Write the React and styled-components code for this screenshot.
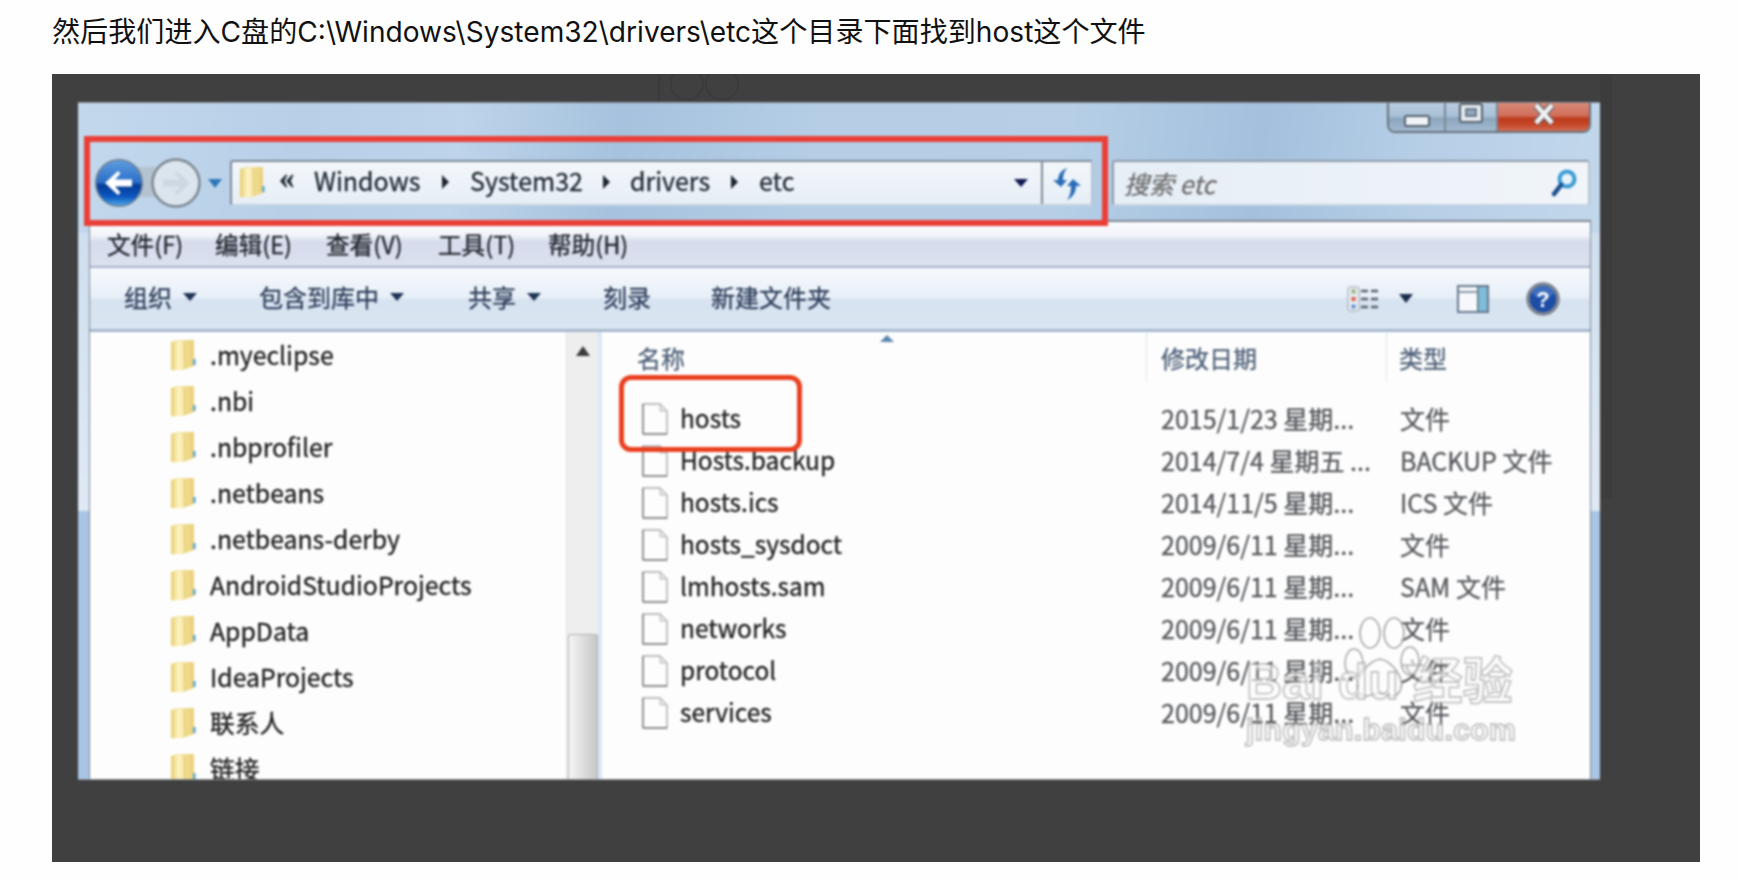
import React from "react";
import styled, { createGlobalStyle } from "styled-components";

const Global = createGlobalStyle`
  html, body { margin: 0; padding: 0; background: #fefefe; }
  body { font-family: "Noto Sans CJK SC", "Noto Sans", sans-serif; width: 1738px; height: 880px; overflow: hidden; }
  * { box-sizing: border-box; }
`;

const Page = styled.div`
  width: 1738px;
  height: 880px;
  padding-left: 52px;
  background: #fefefe;
`;
const Heading = styled.p`
  margin: 0;
  height: 74px;
  padding-top: 13px;
  font: 400 28.1px/38px Inter, "Noto Sans CJK SC", sans-serif;
  color: #111;
  white-space: nowrap;
`;
const Shot = styled.div`
  position: relative;
  width: 1648px;
  height: 788px;
  padding: 28px 100px 82px 26px;
  background: #404040;
  overflow: hidden;
`;
const Ghost = styled.svg`
  position: absolute;
  left: 0;
  top: 0;
  width: 1648px;
  height: 440px;
`;
const Win = styled.div`
  position: relative;
  width: 1522px;
  height: 678px;
  display: flex;
  flex-direction: column;
  overflow: hidden;
  filter: blur(0.9px);
  -webkit-text-stroke: 0.3px currentColor;
  border-top: 1px solid #8a9099;
  border-bottom: 1px solid #8d949c;
  background: linear-gradient(97deg, #c3d8ec 0, #b7d0e8 14%, #bdd4ea 24%, #a6c2de 34%, #b5cee6 46%, #b6cfe7 62%, #a4c0dd 74%, #b6cfe7 84%, #c6daed 100%);
`;
const SideBand = styled.div`
  position: absolute;
  top: 130px;
  bottom: 0;
  ${(p) => (p.$right ? "right: 0; width: 9px;" : "left: 0; width: 11px;")}
  background: linear-gradient(#cfdfef 0, #dfe9f4 278px, #a9c5e5 278px);
`;
const TitleRow = styled.div`
  height: 57px;
  display: flex;
  justify-content: flex-end;
  align-items: flex-start;
  padding-right: 9px;
`;
const Caption = styled.div`
  display: flex;
  height: 30px;
  border: 2px solid #69717b;
  border-top: 0;
  border-radius: 0 0 8px 8px;
  overflow: hidden;
`;
const CapBtn = styled.div`
  width: ${(p) => p.$w}px;
  display: flex;
  justify-content: center;
  align-items: ${(p) => p.$align || "center"};
  padding-bottom: ${(p) => p.$pb || 0}px;
  border-left: ${(p) => (p.$first ? "0" : "2px solid #7c8792")};
  background: ${(p) =>
    p.$close
      ? "linear-gradient(#d98a78 0, #cf6f5a 45%, #bd3a1c 55%, #c64a2a 80%, #d36f57 100%)"
      : "linear-gradient(#b8cde0 0, #a8c0d6 48%, #8ba5bd 55%, #a3bbd2 100%)"};
`;
const NavRow = styled.div`
  height: 46px;
  display: flex;
  align-items: stretch;
  padding: 0 12px 0 7px;
`;
const RoundBtns = styled.div`
  position: relative;
  width: 145px;
  flex: none;
  height: 46px;
  display: flex;
  align-items: center;
  padding-left: 9px;
`;
const Capsule = styled.i`
  position: absolute;
  left: 40px;
  top: 7px;
  width: 42px;
  height: 30px;
  background: #b5c3d1;
`;
const RoundIcon = styled.svg`
  position: relative;
  flex: none;
  margin-right: ${(p) => p.$mr || 0}px;
`;
const Address = styled.div`
  width: 863px;
  flex: none;
  display: flex;
  align-items: center;
  border: 2px solid #7e8a97;
  border-bottom-color: #c4d3e2;
  border-right-color: #b6c3d0;
  border-radius: 3px;
  background: linear-gradient(#f3f7fb, #e6eef6);
`;
const Crumbs = styled.div`
  flex: 1;
  display: flex;
  align-items: center;
  padding-left: 6px;
  padding-bottom: 2px;
`;
const Crumb = styled.span`
  width: ${(p) => p.$w}px;
  flex: none;
  font-size: 25px;
  line-height: 40px;
  margin-top: -4px;
  color: #1e2732;
  white-space: nowrap;
`;
const Chevrons = styled.span`
  width: 48px;
  flex: none;
  padding-left: 13px;
  font: 700 31px/32px "Liberation Serif", serif;
  margin-top: -8px;
  color: #1e2732;
`;
const Arrow = styled.i`
  display: block;
  flex: none;
  width: 0;
  height: 0;
  margin: ${(p) => p.$m || "0"};
  border-top: ${(p) => p.$s * 0.7}px solid ${(p) => p.$c || "#1c2a3e"};
  border-left: ${(p) => p.$s * 0.6}px solid transparent;
  border-right: ${(p) => p.$s * 0.6}px solid transparent;
`;
const Tri = styled.i`
  display: block;
  flex: none;
  width: 0;
  height: 0;
  margin-right: ${(p) => p.$mr}px;
  border-left: 7px solid #1c2430;
  border-top: 7px solid transparent;
  border-bottom: 7px solid transparent;
`;
const AddrEnd = styled.div`
  width: 50px;
  flex: none;
  align-self: stretch;
  display: flex;
  align-items: center;
  justify-content: center;
  border-left: 2px solid #7e8a97;
`;
const AddrDrop = styled.div`
  width: 40px;
  flex: none;
  display: flex;
  justify-content: center;
`;
const Search = styled.div`
  width: 478px;
  flex: none;
  margin-left: 19px;
  display: flex;
  align-items: center;
  justify-content: space-between;
  padding: 0 11px 0 10px;
  border: 2px solid #8f9ba8;
  border-bottom-color: #c4d3e2;
  border-right-color: #b6c3d0;
  border-radius: 3px;
  background: linear-gradient(90deg, #e6eef6, #f1f5fa);
`;
const SearchText = styled.span`
  font-size: 25px;
  font-style: italic;
  margin-top: -1px;
  color: #6d6d6d;
`;
const Pane = styled.div`
  flex: 1;
  min-height: 0;
  margin: 14px 9px 0 11px;
  display: flex;
  flex-direction: column;
  border: 1px solid #7f8893;
  border-bottom: 0;
  border-top-width: 2px;
  background: #fdfdfd;
`;
const MenuBar = styled.div`
  height: 46px;
  flex: none;
  display: flex;
  align-items: center;
  padding-left: 17px;
  border-bottom: 2px solid #a5b3c7;
  background: linear-gradient(#fbfcfe 0, #f2f4fa 30%, #d6dcec 45%, #dbe1ef 100%);
`;
const MenuItem = styled.span`
  width: ${(p) => p.$w}px;
  flex: none;
  font-size: 23.6px;
  line-height: 46px;
  color: #20242c;
  white-space: nowrap;
`;
const ToolBar = styled.div`
  height: 64px;
  flex: none;
  display: flex;
  align-items: center;
  padding: 0 0 0 34px;
  border-bottom: 3px solid #a7b9cf;
  background: linear-gradient(#f7fafd 0, #e7eff8 48%, #d8e3f1 52%, #dae5f2 100%);
`;
const Tool = styled.div`
  display: flex;
  align-items: center;
  width: ${(p) => p.$w}px;
  flex: none;
  gap: 11px;
  padding-bottom: 4px;
  font-size: 24px;
  color: #2b3b58;
  white-space: nowrap;
`;
const ToolRight = styled.div`
  margin-left: auto;
  display: flex;
  align-items: center;
  padding-right: 30px;
`;
const ToolGap = styled.span`
  width: 37px;
`;
const Body = styled.div`
  flex: 1;
  min-height: 0;
  display: flex;
`;
const Tree = styled.div`
  width: 476px;
  flex: none;
  padding: 0 0 0 79px;
  overflow: hidden;
`;
const TreeRow = styled.div`
  height: 46px;
  display: flex;
  align-items: center;
  gap: 13px;
  font-size: 24.8px;
  color: #1c1c1c;
  white-space: nowrap;
`;
const TreeLabel = styled.span`
  margin-top: -3px;
`;
const Scroll = styled.div`
  width: 32px;
  flex: none;
  display: flex;
  flex-direction: column;
  justify-content: space-between;
  align-items: center;
  padding-top: 14px;
  background: #eeeeee;
  border-left: 1px solid #e2e2e2;
`;
const ScrollUp = styled.i`
  display: block;
  width: 0;
  height: 0;
  border-bottom: 10px solid #3c3c3c;
  border-left: 7px solid transparent;
  border-right: 7px solid transparent;
`;
const Thumb = styled.div`
  width: 30px;
  height: 145px;
  border: 1px solid #b3b3b3;
  border-bottom: 0;
  border-radius: 3px 3px 0 0;
  background: linear-gradient(90deg, #f5f5f5, #d9d9d9 60%, #c7c7c7);
`;
const List = styled.div`
  position: relative;
  flex: 1;
  min-width: 0;
  padding-left: 35px;
  border-left: 4px solid #dbe7f4;
`;
const HeadRow = styled.div`
  display: grid;
  grid-template-columns: 509px 240px 1fr;
  height: 66px;
  align-items: start;
`;
const HeadCell = styled.div`
  height: 50px;
  line-height: 52px;
  font-size: 24px;
  color: #4d5f78;
  padding-left: ${(p) => p.$pl || 0}px;
  border-left: ${(p) => (p.$line ? "1px solid #dfe8f1" : "0")};
`;
const SortMark = styled.i`
  position: absolute;
  left: 278px;
  top: 3px;
  width: 0;
  height: 0;
  border-bottom: 7px solid #5a87ad;
  border-left: 7px solid transparent;
  border-right: 7px solid transparent;
`;
const FileRow = styled.div`
  display: grid;
  grid-template-columns: 524px 239px 1fr;
  height: 42px;
  align-items: center;
  font-size: 24.5px;
  color: #1c1c1c;
  white-space: nowrap;
`;
const FileName = styled.div`
  display: flex;
  align-items: center;
  gap: 12px;
  padding-left: 5px;
`;
const FileLabel = styled.span`
  margin-top: -3px;
`;
const Meta = styled.div`
  font-size: 25px;
  margin-top: -3px;
  color: #56585c;
`;
const RedBox = styled.div`
  position: absolute;
  left: ${(p) => p.$l}px;
  top: ${(p) => p.$t}px;
  width: ${(p) => p.$w}px;
  height: ${(p) => p.$h}px;
  border: ${(p) => p.$b}px solid ${(p) => p.$c};
  border-radius: ${(p) => p.$r}px;
`;
const Mark = styled.div`
  position: absolute;
  left: 1168px;
  top: 514px;
  width: 275px;
  height: 130px;
  pointer-events: none;
  color: rgba(253, 253, 253, 0.62);
  -webkit-text-stroke: 1.8px rgba(160, 160, 160, 0.6);
  font-family: "Liberation Sans", "Noto Sans CJK SC", sans-serif;
`;
const MarkLine = styled.div`
  position: absolute;
  left: 0;
  top: ${(p) => p.$t}px;
  font-weight: 700;
  font-size: ${(p) => p.$s}px;
  line-height: 1;
  letter-spacing: ${(p) => p.$ls || 0}px;
  white-space: nowrap;
`;
const Paw = styled.svg`
  position: absolute;
  left: 94px;
  top: 0;
  width: 80px;
  height: 84px;
`;
const IconSvg = styled.svg`
  flex: none;
`;

function Folder() {
  return (
    <IconSvg width="28" height="32" viewBox="0 0 28 32">
      <defs>
        <linearGradient id="fa" x1="0" x2="1">
          <stop offset="0" stopColor="#e9cd6c" />
          <stop offset=".55" stopColor="#fdf4c6" />
          <stop offset="1" stopColor="#f5e39b" />
        </linearGradient>
        <linearGradient id="fb" x1="0" x2="1">
          <stop offset="0" stopColor="#e8cf7c" />
          <stop offset=".3" stopColor="#f6e7a8" />
          <stop offset="1" stopColor="#ebd07a" />
        </linearGradient>
      </defs>
      <path d="M2 3 L8 1 H25 V27 L14 31 L2 31 Z" fill="url(#fb)" />
      <path d="M2 4 Q9 0 15 3 L16 30 Q8 32 2 31 Z" fill="url(#fa)" />
      <path d="M15 3 L16 30" stroke="#dcc068" strokeWidth="0.8" />
      <rect x="24" y="20" width="2.6" height="6" fill="#61a8c8" />
    </IconSvg>
  );
}
function FileIcon() {
  return (
    <IconSvg width="26" height="32" viewBox="0 0 26 32">
      <path d="M1 1 H18 L25 8 V31 H1 Z" fill="#fdfdfd" stroke="#a9a9a9" strokeWidth="1.4" />
      <path d="M1 31 H25" stroke="#8f8f8f" strokeWidth="2" />
      <path d="M1 1 V31" stroke="#8f8f8f" strokeWidth="1.8" />
      <path d="M18 1 V8 H25 Z" fill="#e8e8e8" stroke="#b9b9b9" />
    </IconSvg>
  );
}
function Back() {
  return (
    <RoundIcon width="50" height="50" viewBox="0 0 50 50" $mr={7}>
      <defs>
        <linearGradient id="bb" x1="0" x2="0" y1="0" y2="1">
          <stop offset="0" stopColor="#5d9de0" />
          <stop offset=".48" stopColor="#2b6fc8" />
          <stop offset=".55" stopColor="#073a96" />
          <stop offset=".8" stopColor="#0b57c0" />
          <stop offset="1" stopColor="#4ba6ea" />
        </linearGradient>
      </defs>
      <circle cx="25" cy="25" r="24" fill="#6f7f90" />
      <circle cx="25" cy="25" r="22.5" fill="url(#bb)" />
      <path d="M11 25 L24 13 L26.5 15.5 L21 21.5 H38 V28.5 H21 L26.5 34.5 L24 37 Z" fill="#fff" />
    </RoundIcon>
  );
}
function Forward() {
  return (
    <RoundIcon width="50" height="50" viewBox="0 0 50 50" $mr={7}>
      <circle cx="25" cy="25" r="23.5" fill="#dbe5ee" stroke="#7c8791" strokeWidth="2.5" />
      <path d="M39 25 L26 13 L23.5 15.5 L29 21.5 H12 V28.5 H29 L23.5 34.5 L26 37 Z" fill="#cdd8e2" />
    </RoundIcon>
  );
}
function Refresh() {
  return (
    <IconSvg width="30" height="36" viewBox="0 0 30 36">
      <path d="M1 15 L9 22 L15 15 H11 C11 9 13 6 15 3 C10 5 6 9 6 15 Z" fill="#2d6db5" />
      <path d="M29 21 L21 14 L15 21 H19 C19 27 18 31 15 35 C21 32 24 27 24 21 Z" fill="#2d6db5" />
    </IconSvg>
  );
}
function Magnifier() {
  return (
    <IconSvg width="26" height="28" viewBox="0 0 26 28">
      <circle cx="16" cy="10" r="7.5" fill="#e8f2fa" stroke="#3a9bd2" strokeWidth="4" />
      <path d="M10 16 L3 25" stroke="#1f5291" strokeWidth="4.5" strokeLinecap="round" />
    </IconSvg>
  );
}
function ViewIcon() {
  return (
    <IconSvg width="32" height="26" viewBox="0 0 32 26">
      <rect x="1" y="1" width="11" height="24" rx="2" fill="#e9edf3" stroke="#9aa3ad" />
      <rect x="4.5" y="3.5" width="4" height="4" fill="#8fb77b" />
      <rect x="4.5" y="11" width="4" height="4" fill="#e05a4c" />
      <rect x="4.5" y="18.5" width="4" height="4" fill="#5f8fd8" />
      {[5, 13, 21].map((y) => (
        <path key={y} d="M14 0 H21 M24 0 H31" transform={`translate(0 ${y})`} stroke="#555f6b" strokeWidth="2.4" />
      ))}
    </IconSvg>
  );
}
function PaneIcon() {
  return (
    <IconSvg width="32" height="28" viewBox="0 0 32 28">
      <rect x="1" y="1" width="30" height="26" fill="#f6f8fb" stroke="#67788c" strokeWidth="2" />
      <rect x="20" y="2" width="10" height="24" fill="#7fbcd8" />
      <rect x="20" y="2" width="1.6" height="24" fill="#67788c" />
      <path d="M2 7 H20" stroke="#67788c" strokeWidth="1.5" />
    </IconSvg>
  );
}
function Help() {
  return (
    <IconSvg width="34" height="34" viewBox="0 0 34 34">
      <circle cx="17" cy="17" r="15" fill="#1d4da6" stroke="#7d8590" strokeWidth="3.5" />
      <ellipse cx="17" cy="10" rx="11" ry="6" fill="#4b7ccb" opacity=".7" />
      <text x="17" y="25" textAnchor="middle" fontFamily="Liberation Sans" fontWeight="700" fontSize="22" fill="#fff">?</text>
    </IconSvg>
  );
}
function MinIcon() {
  return (
    <IconSvg width="26" height="12" viewBox="0 0 26 12">
      <rect x="1" y="1" width="24" height="10" rx="1.5" fill="#f2f5f8" stroke="#55606c" strokeWidth="2" />
    </IconSvg>
  );
}
function MaxIcon() {
  return (
    <IconSvg width="24" height="20" viewBox="0 0 24 20">
      <rect x="1" y="1" width="22" height="18" rx="2" fill="#e5ebf1" stroke="#55606c" strokeWidth="2" />
      <rect x="7" y="6" width="10" height="7" fill="#93a9be" stroke="#55606c" strokeWidth="1.5" />
    </IconSvg>
  );
}
function CloseIcon() {
  return (
    <IconSvg width="22" height="22" viewBox="0 0 22 22">
      <path d="M3 2 L19 20 M19 2 L3 20" stroke="#5b6470" strokeWidth="7" />
      <path d="M3 2 L19 20 M19 2 L3 20" stroke="#f2f2f2" strokeWidth="4.5" />
    </IconSvg>
  );
}

const folders = [".myeclipse", ".nbi", ".nbprofiler", ".netbeans", ".netbeans-derby", "AndroidStudioProjects", "AppData", "IdeaProjects", "联系人", "链接"];
const files = [
  ["hosts", "2015/1/23 星期...", "文件"],
  ["Hosts.backup", "2014/7/4 星期五 ...", "BACKUP 文件"],
  ["hosts.ics", "2014/11/5 星期...", "ICS 文件"],
  ["hosts_sysdoct", "2009/6/11 星期...", "文件"],
  ["lmhosts.sam", "2009/6/11 星期...", "SAM 文件"],
  ["networks", "2009/6/11 星期...", "文件"],
  ["protocol", "2009/6/11 星期...", "文件"],
  ["services", "2009/6/11 星期...", "文件"],
];

export default function App() {
  return (
    <Page>
      <Global />
      <Heading>然后我们进入C盘的C:\Windows\System32\drivers\etc这个目录下面找到host这个文件</Heading>
      <Shot>
        <Ghost viewBox="0 0 1648 440">
          <path d="M607 0 V28" stroke="#3a3a3a" strokeWidth="2" />
          <circle cx="635" cy="10" r="16" fill="none" stroke="#3b3b3b" strokeWidth="2" />
          <circle cx="670" cy="10" r="16" fill="none" stroke="#3b3b3b" strokeWidth="2" />
          <rect x="1548" y="0" width="12" height="424" fill="#3c3c3c" />
        </Ghost>
        <Win>
          <SideBand />
          <SideBand $right />
          <TitleRow>
            <Caption>
              <CapBtn $w={55} $first $align="flex-end" $pb={4}><MinIcon /></CapBtn>
              <CapBtn $w={52} $align="flex-start"><MaxIcon /></CapBtn>
              <CapBtn $w={93} $close $align="flex-start"><CloseIcon /></CapBtn>
            </Caption>
          </TitleRow>
          <NavRow>
            <RoundBtns>
              <Capsule />
              <Back />
              <Forward />
              <Arrow $s={13} $c="#2c78b8" />
            </RoundBtns>
            <Address>
              <Crumbs>
                <Folder />
                <Chevrons>«</Chevrons>
                <Crumb $w={128}>Windows</Crumb>
                <Tri $mr={21} />
                <Crumb $w={133}>System32</Crumb>
                <Tri $mr={20} />
                <Crumb $w={101}>drivers</Crumb>
                <Tri $mr={21} />
                <Crumb $w={40}>etc</Crumb>
              </Crumbs>
              <AddrDrop><Arrow $s={12} $c="#11194f" /></AddrDrop>
              <AddrEnd><Refresh /></AddrEnd>
            </Address>
            <Search>
              <SearchText>搜索 etc</SearchText>
              <Magnifier />
            </Search>
          </NavRow>
          <Pane>
            <MenuBar>
              <MenuItem $w={108}>文件(F)</MenuItem>
              <MenuItem $w={111}>编辑(E)</MenuItem>
              <MenuItem $w={112}>查看(V)</MenuItem>
              <MenuItem $w={110}>工具(T)</MenuItem>
              <MenuItem $w={90}>帮助(H)</MenuItem>
            </MenuBar>
            <ToolBar>
              <Tool $w={135}>组织 <Arrow $s={12} $c="#1f3354" /></Tool>
              <Tool $w={209}>包含到库中 <Arrow $s={12} $c="#1f3354" /></Tool>
              <Tool $w={135}>共享 <Arrow $s={12} $c="#1f3354" /></Tool>
              <Tool $w={108}>刻录</Tool>
              <Tool $w={130}>新建文件夹</Tool>
              <ToolRight>
                <ViewIcon />
                <Arrow $s={13} $c="#1b2c4a" $m="0 44px 0 20px" />
                <PaneIcon />
                <ToolGap />
                <Help />
              </ToolRight>
            </ToolBar>
            <Body>
              <Tree>
                {folders.map((f) => (
                  <TreeRow key={f}><Folder /><TreeLabel>{f}</TreeLabel></TreeRow>
                ))}
              </Tree>
              <Scroll>
                <ScrollUp />
                <Thumb />
              </Scroll>
              <List>
                <SortMark />
                <HeadRow>
                  <HeadCell>名称</HeadCell>
                  <HeadCell $line $pl={14}>修改日期</HeadCell>
                  <HeadCell $line $pl={12}>类型</HeadCell>
                </HeadRow>
                {files.map(([n, d, t]) => (
                  <FileRow key={n}>
                    <FileName><FileIcon /><FileLabel>{n}</FileLabel></FileName>
                    <Meta>{d}</Meta>
                    <Meta>{t}</Meta>
                  </FileRow>
                ))}
              </List>
            </Body>
          </Pane>
          <RedBox $l={6} $t={33} $w={1024} $h={90} $b={6} $c="#ea3f37" $r={0} />
          <RedBox $l={541} $t={272} $w={183} $h={77} $b={5} $c="#ea3f1f" $r={12} />
          <Mark>
            <Paw viewBox="0 0 80 84">
              <ellipse cx="14" cy="46" rx="9" ry="14" fill="currentColor" stroke="#a8a8a8" strokeWidth="1.6" />
              <ellipse cx="30" cy="16" rx="10" ry="15" fill="currentColor" stroke="#a8a8a8" strokeWidth="1.6" />
              <ellipse cx="54" cy="16" rx="10" ry="15" fill="currentColor" stroke="#a8a8a8" strokeWidth="1.6" />
              <ellipse cx="70" cy="44" rx="9" ry="14" fill="currentColor" stroke="#a8a8a8" strokeWidth="1.6" />
              <path d="M40 42 C52 44 66 62 60 74 C54 84 46 76 40 76 C34 76 24 84 18 74 C14 62 28 44 40 42 Z" fill="currentColor" stroke="#a8a8a8" strokeWidth="1.6" />
            </Paw>
            <MarkLine $t={40} $s={50}>Bai du 经验</MarkLine>
            <MarkLine $t={98} $s={30} $ls={0.4}>jingyan.baidu.com</MarkLine>
          </Mark>
        </Win>
      </Shot>
    </Page>
  );
}
